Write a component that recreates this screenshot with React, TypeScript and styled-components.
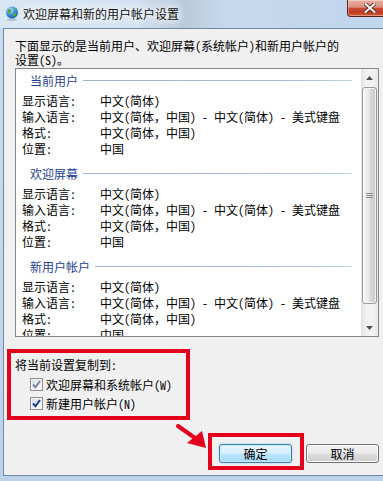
import React from 'react';
import styled, { createGlobalStyle } from 'styled-components';

const Global = createGlobalStyle`
  html, body { margin: 0; padding: 0; background: #c3d8ee; }
  body {
    font-family: "Noto Sans CJK SC", "Liberation Sans", sans-serif;
    font-size: 12px;
    color: #000;
    font-feature-settings: "hwid" 1;
  }
`;

const Window = styled.div`
  position: relative;
  width: 383px;
  height: 481px;
  overflow: hidden;
  display: flex;
  flex-direction: column;
  background: linear-gradient(180deg, #c8dbf0 0%, #bdd3eb 100%);
`;

const TitleBar = styled.div`
  flex: none;
  height: 28px;
  display: flex;
  align-items: flex-start;
  background: linear-gradient(90deg, #d9e6f3 0%, #d3e2f1 35%, #b9c9da 48%, #c6d8ec 58%, #c1d7ee 100%);
`;

const TitleIcon = styled.svg`
  flex: none;
  width: 14px;
  height: 15px;
  margin: 6px 0 0 5px;
`;

const TitleText = styled.div`
  margin: 7px 0 0 4px;
  line-height: 14px;
  color: #111;
  text-shadow: 0 0 6px #fff, 0 0 10px #fff, 0 0 14px #fff;
  white-space: nowrap;
`;

const CloseButton = styled.div`
  flex: none;
  margin-left: auto;
  margin-right: -10px;
  width: 46px;
  height: 17px;
  box-sizing: border-box;
  border: 1px solid #5b2219;
  border-top: none;
  border-radius: 0 0 4px 4px;
  background: linear-gradient(180deg, #e9b0a3 0%, #dc8d7d 45%, #c84a34 52%, #c13a22 80%, #d9663f 100%);
  box-shadow: inset 0 0 0 1px rgba(255, 255, 255, 0.35);
  display: flex;
  align-items: center;
  justify-content: center;
`;

const Client = styled.div`
  flex: none;
  margin-left: 3px;
  height: 448px;
  box-sizing: border-box;
  border: 1px solid #7187a6;
  border-right: none;
  background: #f0f0f0;
  display: flex;
  flex-direction: column;
`;

const Description = styled.div`
  margin: 10px 0 0 11px;
  line-height: 14px;
  white-space: nowrap;
`;

const Wide = styled.span`
  font-feature-settings: normal;
`;

const ListBox = styled.div`
  flex: none;
  margin: 1px 4px 0 11px;
  height: 269px;
  box-sizing: border-box;
  border: 1px solid #828790;
  background: #fff;
  display: flex;
  overflow: hidden;
`;

const ListContent = styled.div`
  flex: 1;
  min-width: 0;
  overflow: hidden;
  padding: 2px 9px 0 6px;
`;

const Section = styled.div`
  margin-bottom: 7px;
`;

const GroupHeader = styled.div`
  display: flex;
  align-items: center;
  height: 18px;
  margin-bottom: 4px;
  padding-left: 8px;
  color: #1f3f90;
  white-space: nowrap;
  &::after {
    content: "";
    flex: 1;
    height: 1px;
    margin-left: 5px;
    background: linear-gradient(90deg, #9fb5d4 0%, #a9bcd8 80%, #c4d2e6 100%);
  }
`;

const InfoRow = styled.div`
  display: grid;
  grid-template-columns: 78px 1fr;
  height: 16px;
  line-height: 16px;
  white-space: nowrap;
`;

const ScrollBar = styled.div`
  flex: none;
  width: 17px;
  display: flex;
  flex-direction: column;
  background: linear-gradient(90deg, #e3e3e3 0%, #f2f2f2 30%, #f2f2f2 70%, #e7e7e7 100%);
`;

const ScrollArrow = styled.div`
  flex: none;
  height: 17px;
  display: flex;
  align-items: center;
  justify-content: center;
`;

const Spacer = styled.div`
  flex: 1;
`;

const Thumb = styled.div`
  flex: none;
  height: 217px;
  margin: 1px 1px 0 1px;
  box-sizing: border-box;
  border: 1px solid #989898;
  border-radius: 3px;
  background: linear-gradient(90deg, #f6f6f6 0%, #e9e9e9 45%, #d8d8d8 55%, #cacaca 100%);
  box-shadow: inset 0 0 0 1px rgba(255, 255, 255, 0.7);
  display: flex;
  align-items: center;
  justify-content: center;
`;

const GroupBox = styled.div`
  flex: none;
  margin: 12px 0 0 3px;
  width: 183px;
  height: 71px;
  box-sizing: border-box;
  border: 4px solid #e4001c;
  padding: 5px 0 0 4px;
  display: flex;
  flex-direction: column;
`;

const GroupLabel = styled.div`
  line-height: 14px;
  white-space: nowrap;
`;

const CheckRow = styled.div<{ $first?: boolean }>`
  display: flex;
  align-items: center;
  height: 19px;
  margin: ${p => (p.$first ? '3px' : '0')} 0 0 15px;
  white-space: nowrap;
`;

const CheckBox = styled.span`
  flex: none;
  width: 13px;
  height: 13px;
  box-sizing: border-box;
  margin-right: 3px;
  border: 1px solid #8e8f8f;
  background: linear-gradient(135deg, #d4d8de 0%, #eef0f2 55%, #ffffff 100%);
  box-shadow: inset 0 0 0 1px #f4f4f4;
  display: flex;
  align-items: center;
  justify-content: center;
`;

const ButtonRow = styled.div`
  flex: none;
  margin-top: 13px;
  padding-right: 4px;
  display: flex;
  justify-content: flex-end;
  align-items: flex-start;
  gap: 2px;
`;

const Highlight = styled.div`
  border: 4px solid #e4001c;
  padding: 7px 8px 3px 7px;
  display: flex;
`;

const Button = styled.button<{ $default?: boolean; $offset?: number }>`
  width: 73px;
  height: 19px;
  margin: ${p => p.$offset ?? 0}px 0 0 0;
  padding: 0;
  box-sizing: border-box;
  font-family: inherit;
  font-size: 12px;
  line-height: 17px;
  color: #000;
  border-radius: 3px;
  border: 1px solid ${p => (p.$default ? '#3c7fb1' : '#707070')};
  background: ${p =>
    p.$default
      ? 'linear-gradient(180deg, #eaf6fd 0%, #d7effc 48%, #bde6fd 52%, #a6d9f4 100%)'
      : 'linear-gradient(180deg, #f2f2f2 0%, #ebebeb 48%, #dddddd 52%, #cfcfcf 100%)'};
  box-shadow: ${p =>
    p.$default ? 'inset 0 0 0 1px #c8e8fb, 0 0 2px #8cc6ea' : 'inset 0 0 0 1px #fcfcfc'};
`;

const ArrowMark = styled.svg`
  position: absolute;
  left: 175px;
  top: 422px;
  width: 36px;
  height: 30px;
  pointer-events: none;
`;

const Check = ({ color }: { color: string }) => (
  <svg width="9" height="9" viewBox="0 0 9 9">
    <path d="M1 4.5 L3.5 7.2 L8 1" fill="none" stroke={color} strokeWidth="2" strokeLinejoin="miter" />
  </svg>
);

const withWideComma = (text: string) =>
  text.split('，').flatMap((part, i) =>
    i === 0 ? [part] : [<Wide key={i}>，</Wide>, part]
  );

const sections = ['当前用户', '欢迎屏幕', '新用户帐户'];

const rows: [string, string][] = [
  ['显示语言:', '中文(简体)'],
  ['输入语言:', '中文(简体，中国) - 中文(简体) - 美式键盘'],
  ['格式:', '中文(简体，中国)'],
  ['位置:', '中国'],
];

export default function App() {
  return (
    <>
      <Global />
      <Window>
        <TitleBar>
          <TitleIcon viewBox="0 0 14 15">
            <defs>
              <radialGradient id="globe" cx="0.35" cy="0.3" r="0.8">
                <stop offset="0" stopColor="#bfe6ff" />
                <stop offset="0.5" stopColor="#3d8fe0" />
                <stop offset="1" stopColor="#114a9c" />
              </radialGradient>
            </defs>
            <ellipse cx="7" cy="13.6" rx="5" ry="1.2" fill="#8aa0b8" opacity="0.6" />
            <circle cx="7" cy="6.5" r="6" fill="url(#globe)" />
            <path d="M3 3.5 C4.5 2.5 6 3 6.2 4.6 C6.4 6 4.6 6.4 4.2 8 C3.2 7.4 2.4 5.4 3 3.5 Z" fill="#4caf3a" />
            <path d="M8.2 6.8 C9.6 6.4 11.2 7.2 10.8 9 C10.4 10.6 8.6 11.2 8 10 C7.6 9 8.6 8.4 8.2 6.8 Z" fill="#4caf3a" />
            <path d="M8 1.2 C9.5 1.6 11 2.6 11.6 4 C10.4 4 9.2 3.2 8 1.2 Z" fill="#5cbc45" />
          </TitleIcon>
          <TitleText>欢迎屏幕和新的用户帐户设置</TitleText>
          <CloseButton>
            <svg width="12" height="10" viewBox="0 0 12 10">
              <path d="M1.5 1 L10.5 9 M10.5 1 L1.5 9" stroke="#4a1a12" strokeWidth="3.6" strokeLinecap="square" />
              <path d="M1.5 1 L10.5 9 M10.5 1 L1.5 9" stroke="#ffffff" strokeWidth="2" strokeLinecap="square" />
            </svg>
          </CloseButton>
        </TitleBar>
        <Client>
          <Description>
            下面显示的是当前用户、欢迎屏幕(系统帐户)和新用户帐户的
            <br />
            设置(S)。
          </Description>
          <ListBox>
            <ListContent>
              {sections.map(title => (
                <Section key={title}>
                  <GroupHeader>{title}</GroupHeader>
                  {rows.map(([k, v]) => (
                    <InfoRow key={k}>
                      <span>{k}</span>
                      <span>{withWideComma(v)}</span>
                    </InfoRow>
                  ))}
                </Section>
              ))}
            </ListContent>
            <ScrollBar>
              <ScrollArrow>
                <svg width="7" height="4" viewBox="0 0 7 4">
                  <path d="M0 4 L3.5 0 L7 4 Z" fill="#505050" />
                </svg>
              </ScrollArrow>
              <Thumb>
                <svg width="7" height="6" viewBox="0 0 7 6">
                  <path d="M0 0.5 H7 M0 2.5 H7 M0 4.5 H7" stroke="#8a8a8a" strokeWidth="1" />
                </svg>
              </Thumb>
              <Spacer />
              <ScrollArrow>
                <svg width="7" height="4" viewBox="0 0 7 4">
                  <path d="M0 0 L7 0 L3.5 4 Z" fill="#505050" />
                </svg>
              </ScrollArrow>
            </ScrollBar>
          </ListBox>
          <GroupBox>
            <GroupLabel>将当前设置复制到:</GroupLabel>
            <CheckRow $first>
              <CheckBox>
                <Check color="#7d8aa2" />
              </CheckBox>
              欢迎屏幕和系统帐户(W)
            </CheckRow>
            <CheckRow>
              <CheckBox>
                <Check color="#1f3c8c" />
              </CheckBox>
              新建用户帐户(N)
            </CheckRow>
          </GroupBox>
          <ButtonRow>
            <Highlight>
              <Button $default>确定</Button>
            </Highlight>
            <Button $offset={11}>取消</Button>
          </ButtonRow>
        </Client>
        <ArrowMark viewBox="0 0 36 30">
          <path d="M3 4 L20 16" stroke="#e4001c" strokeWidth="4" strokeLinecap="round" />
          <path d="M31 26 L12 21 L27 9 Z" fill="#e4001c" />
        </ArrowMark>
      </Window>
    </>
  );
}
